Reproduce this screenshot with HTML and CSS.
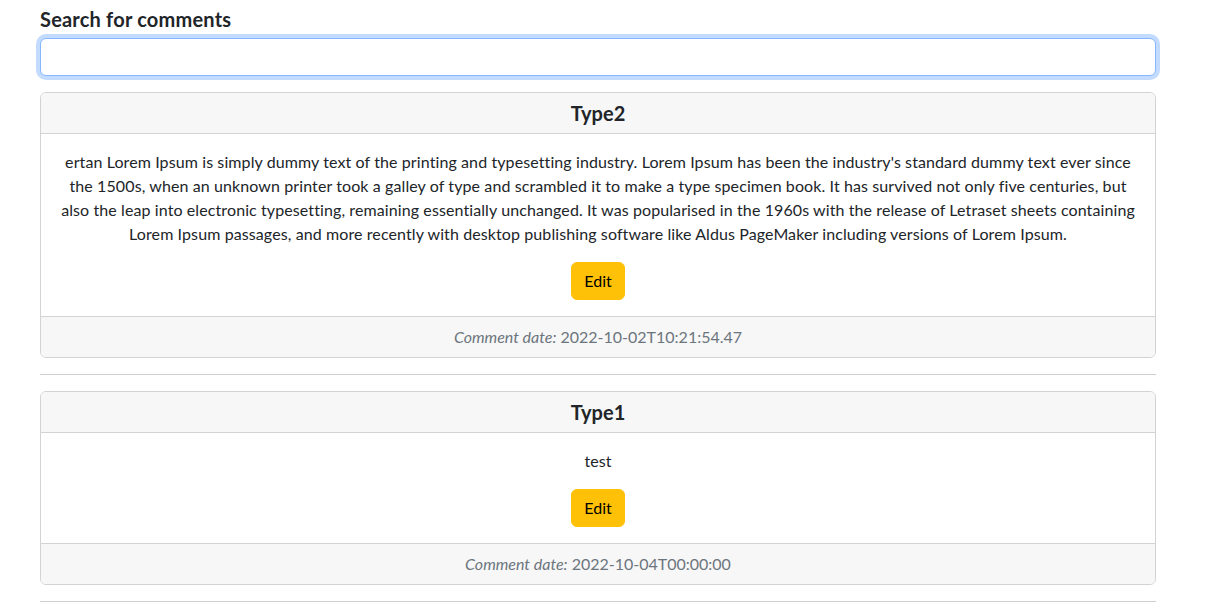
FILE: index.html
```html
<!DOCTYPE html>
<html lang="en">
<head>
<meta charset="utf-8">
<title>Comments</title>
<link rel="stylesheet" href="styles.css">
</head>
<body>
<main class="page">
  <label class="search-label" for="search">Search for comments</label>
  <input id="search" class="search-input" type="text">

  <section class="card">
    <header class="card-header">Type2</header>
    <div class="card-body">
      <p class="card-text">ertan Lorem Ipsum is simply dummy text of the printing and typesetting industry. Lorem Ipsum has been the industry's standard dummy text ever since the 1500s, when an unknown printer took a galley of type and scrambled it to make a type specimen book. It has survived not only five centuries, but also the leap into electronic typesetting, remaining essentially unchanged. It was popularised in the 1960s with the release of Letraset sheets containing Lorem Ipsum passages, and more recently with desktop publishing software like Aldus PageMaker including versions of Lorem Ipsum.</p>
      <button class="btn-edit" type="button">Edit</button>
    </div>
    <footer class="card-footer"><em>Comment date:</em> 2022-10-02T10:21:54.47</footer>
  </section>
  <hr class="divider">

  <section class="card">
    <header class="card-header">Type1</header>
    <div class="card-body">
      <p class="card-text">test</p>
      <button class="btn-edit" type="button">Edit</button>
    </div>
    <footer class="card-footer"><em>Comment date:</em> 2022-10-04T00:00:00</footer>
  </section>
  <hr class="divider">
</main>
</body>
</html>
```

FILE: styles.css
```css
* { box-sizing: border-box; }
html, body { margin: 0; padding: 0; background: #fff; }
body {
  font-family: "Lato", "Noto Sans", sans-serif;
  font-size: 16px;
  line-height: 24px;
  letter-spacing: 0.1px;
  color: #212529;
}
.page {
  width: 1116px;
  margin-left: 40px;
  padding-top: 7px;
  display: flex;
  flex-direction: column;
}
.search-label {
  font-size: 20px;
  font-weight: 700;
  line-height: 24px;
  letter-spacing: 0.2px;
  margin-bottom: 7px;
}
.search-input {
  height: 38px;
  width: 100%;
  border: 1px solid #86b7fe;
  border-radius: 6px;
  box-shadow: 0 0 0 4px rgba(13,110,253,.25);
  outline: none;
  font: inherit;
  padding: 6px 12px;
  margin-bottom: 16px;
}
.card {
  border: 1px solid #d3d3d3;
  border-radius: 6px;
  overflow: hidden;
}
.card-header {
  background: #f7f7f7;
  border-bottom: 1px solid #d3d3d3;
  padding: 8px 16px;
  text-align: center;
  font-size: 20px;
  font-weight: 700;
  line-height: 24px;
  letter-spacing: 0;
}
.card-body {
  padding: 16px;
  text-align: center;
  display: flex;
  flex-direction: column;
  align-items: center;
}
.card-text {
  margin: 0 0 16px;
}
.btn-edit {
  background: #ffc107;
  border: 1px solid #ffc107;
  border-radius: 6px;
  color: #000;
  font: inherit;
  padding: 6px 12px;
  height: 38px;
}
.card-footer {
  background: #f7f7f7;
  border-top: 1px solid #d3d3d3;
  padding: 8px 16px;
  text-align: center;
  color: #6c757d;
  letter-spacing: 0;
}
.divider {
  margin: 16px 0;
  border: 0;
  border-top: 1px solid #cfcfcf;
  height: 0;
}
```
